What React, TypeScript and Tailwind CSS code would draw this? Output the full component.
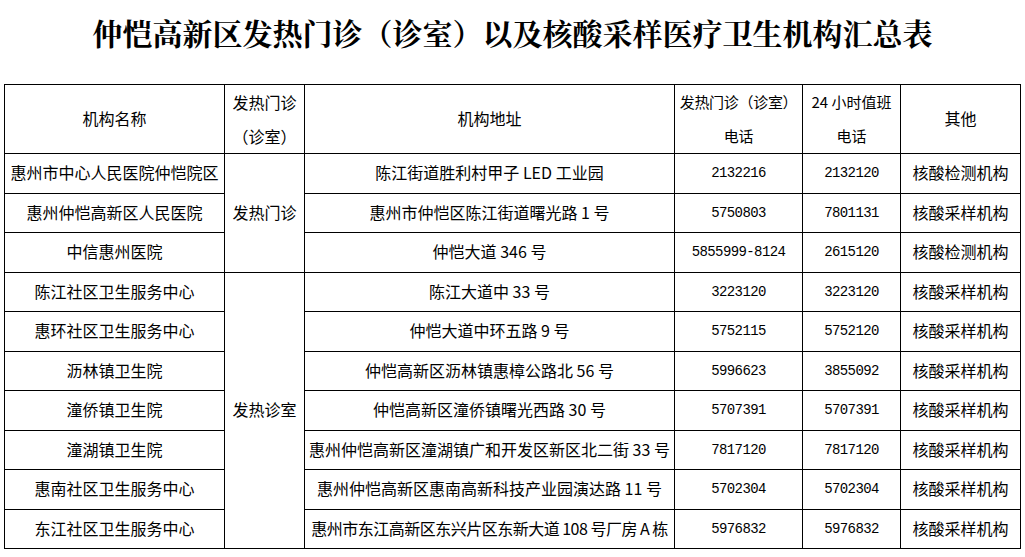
import React from "react";

interface Row {
  name: string;
  addr: string;
  fever: string;
  duty: string;
  other: string;
}

const rows: Row[] = [
  { name: "惠州市中心人民医院仲恺院区", addr: "陈江街道胜利村甲子 LED 工业园", fever: "2132216", duty: "2132120", other: "核酸检测机构" },
  { name: "惠州仲恺高新区人民医院", addr: "惠州市仲恺区陈江街道曙光路 1 号", fever: "5750803", duty: "7801131", other: "核酸采样机构" },
  { name: "中信惠州医院", addr: "仲恺大道 346 号", fever: "5855999-8124", duty: "2615120", other: "核酸检测机构" },
  { name: "陈江社区卫生服务中心", addr: "陈江大道中 33 号", fever: "3223120", duty: "3223120", other: "核酸采样机构" },
  { name: "惠环社区卫生服务中心", addr: "仲恺大道中环五路 9 号", fever: "5752115", duty: "5752120", other: "核酸采样机构" },
  { name: "沥林镇卫生院", addr: "仲恺高新区沥林镇惠樟公路北 56 号", fever: "5996623", duty: "3855092", other: "核酸采样机构" },
  { name: "潼侨镇卫生院", addr: "仲恺高新区潼侨镇曙光西路 30 号", fever: "5707391", duty: "5707391", other: "核酸采样机构" },
  { name: "潼湖镇卫生院", addr: "惠州仲恺高新区潼湖镇广和开发区新区北二街 33 号", fever: "7817120", duty: "7817120", other: "核酸采样机构" },
  { name: "惠南社区卫生服务中心", addr: "惠州仲恺高新区惠南高新科技产业园演达路 11 号", fever: "5702304", duty: "5702304", other: "核酸采样机构" },
  { name: "东江社区卫生服务中心", addr: "惠州市东江高新区东兴片区东新大道 108 号厂房 A 栋", fever: "5976832", duty: "5976832", other: "核酸采样机构" },
];

const cell = "border border-black text-center align-middle px-0 pt-0 whitespace-nowrap";
const txt = `${cell} pb-[3px] leading-[20px]`;
const num = `${cell} pb-0 font-['Liberation_Mono',monospace] text-[14px] tracking-[-0.6px]`;

export default function App() {
  return (
    <div className="w-[1025px] h-[557px] bg-white text-black overflow-hidden font-['Noto_Sans_CJK_SC',sans-serif]">
      {/* Title */}
      <h1 className="h-[66px] pt-[12px] text-center text-[30px] leading-[40px] font-bold font-['Noto_Serif_CJK_SC','Noto_Sans_CJK_SC',serif]">
        仲恺高新区发热门诊（诊室）以及核酸采样医疗卫生机构汇总表
      </h1>

      <div className="pl-[4px] pt-[18px]">
        <table className="w-[1017px] table-fixed border-collapse text-[16px]">
          <colgroup>
            <col className="w-[220px]" />
            <col className="w-[80px]" />
            <col className="w-[370px]" />
            <col className="w-[128px]" />
            <col className="w-[98px]" />
            <col className="w-[120px]" />
          </colgroup>
          <thead>
            <tr className="h-[68px]">
              <th className={`${cell} pb-[2px] font-normal`}>机构名称</th>
              <th className={`${cell} font-normal leading-[34px]`}>
                发热门诊
                <br />
                （诊室）
              </th>
              <th className={`${cell} pb-[2px] font-normal`}>机构地址</th>
              <th className={`${cell} font-normal leading-[34px] text-[15px] tracking-[-0.3px]`}>
                发热门诊（诊室）
                <br />
                电话
              </th>
              <th className={`${cell} font-normal leading-[34px] text-[15px]`}>
                24 小时值班
                <br />
                电话
              </th>
              <th className={`${cell} pb-[2px] font-normal`}>其他</th>
            </tr>
          </thead>
          <tbody>
            {rows.map((r, i) => (
              <tr key={i} className={i % 2 === 0 ? "h-[40px]" : "h-[39px]"}>
                <td className={txt}>{r.name}</td>
                {i === 0 && (
                  <td className={txt} rowSpan={3}>
                    发热门诊
                  </td>
                )}
                {i === 3 && (
                  <td className={txt} rowSpan={7}>
                    发热诊室
                  </td>
                )}
                <td className={`${txt} ${i === 9 ? "tracking-[-0.5px]" : ""}`}>{r.addr}</td>
                <td className={num}>{r.fever}</td>
                <td className={num}>{r.duty}</td>
                <td className={txt}>{r.other}</td>
              </tr>
            ))}
          </tbody>
        </table>
      </div>
    </div>
  );
}
